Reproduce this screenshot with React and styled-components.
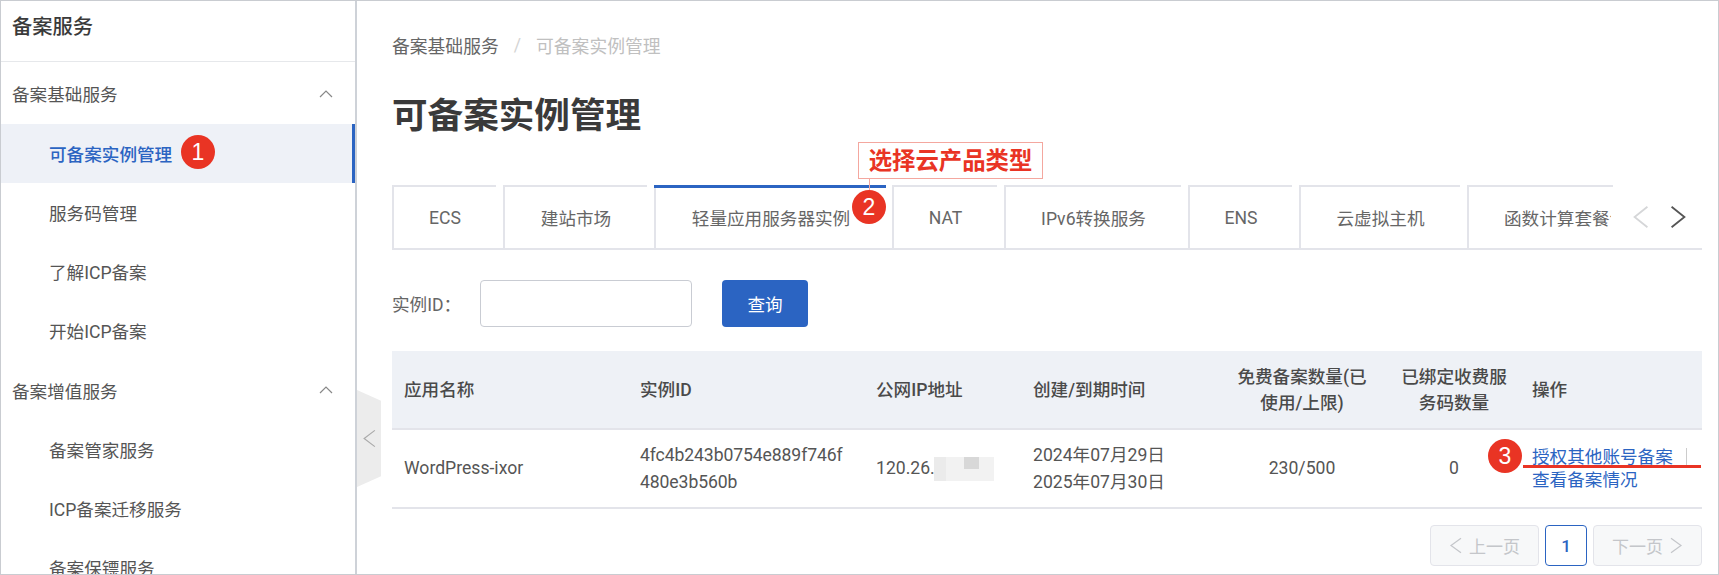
import React from 'react';
import styled, { createGlobalStyle } from 'styled-components';

const GlobalStyle = createGlobalStyle`
  html, body {
    margin: 0;
    padding: 0;
    background: #fff;
    overflow: hidden;
  }
  * {
    box-sizing: border-box;
  }
`;

const FONT = `Roboto, "Noto Sans CJK SC", sans-serif`;
const BLUE = '#2b64c2';
const RED = '#e93424';
const LINE = '#e3e4ea';

const Frame = styled.div`
  position: relative;
  display: flex;
  width: 1719px;
  height: 575px;
  overflow: hidden;
  border: 1px solid #c9ccd1;
  font-family: ${FONT};
  font-size: 17.6px;
  color: #555;
`;

const Sidebar = styled.aside`
  flex: 0 0 356px;
  height: 100%;
  border-right: 2px solid #ced2d8;
  overflow: hidden;
`;

const SideTitle = styled.div`
  height: 61px;
  padding: 0 0 12px 11px;
  border-bottom: 1px solid #e6e8eb;
  display: flex;
  align-items: center;
  font-size: 20.3px;
  font-weight: 500;
  color: #3a3a3a;
`;

const MenuGroup = styled.div`
  height: ${p => p.$first ? 62 : 60}px;
  padding: ${p => p.$first ? '1px' : '0'} 22px 0 11px;
  display: flex;
  align-items: center;
  justify-content: space-between;
`;

const MenuItem = styled.div`
  height: 59px;
  padding-left: 48px;
  display: flex;
  align-items: center;
  color: ${p => p.$active ? BLUE : '#555'};
  font-weight: ${p => p.$active ? 500 : 400};
  background: ${p => p.$active ? '#eef1f7' : 'transparent'};
  border-right: 3px solid ${p => p.$active ? BLUE : 'transparent'};
`;

const Collapse = styled.div`
  position: absolute;
  left: 356px;
  top: 389px;
  width: 24px;
  height: 97px;
  background: #ececec;
  clip-path: polygon(0 0, 100% 11%, 100% 89%, 0 100%);
  display: flex;
  align-items: center;
  justify-content: center;
`;

const Main = styled.main`
  flex: 1;
  min-width: 0;
  padding: 0 16px 0 35px;
`;

const Breadcrumb = styled.div`
  height: 87px;
  display: flex;
  align-items: center;
  gap: 15px;
  font-size: 17.8px;
  color: #666;
`;

const CrumbSep = styled.span`
  color: #d4d4d4;
`;

const CrumbCurrent = styled.span`
  color: #c0c0c0;
`;

const PageTitle = styled.h1`
  margin: 0;
  height: 97px;
  padding-top: 4px;
  font-size: 35.6px;
  line-height: 49px;
  font-weight: 700;
  color: #3a3a3a;
`;

const TabsBar = styled.div`
  display: flex;
  align-items: stretch;
  height: 65px;
  border-bottom: 2px solid ${LINE};
`;

const TabsScroller = styled.div`
  display: flex;
  width: 1221px;
  overflow: hidden;
`;

// the top rule of a tab stops 7px short of the next tab
const Tab = styled.div`
  flex: 0 0 ${p => p.$w}px;
  display: flex;
  align-items: center;
  justify-content: center;
  white-space: nowrap;
  color: #666;
  padding: 2px 7px 0 2px;
  margin-left: ${p => p.$gap || 0}px;
  background:
    linear-gradient(${LINE}, ${LINE}) top left / calc(100% - 7px) 2px no-repeat,
    linear-gradient(${LINE}, ${LINE}) top left / 2px 100% no-repeat;
  ${p => p.$active && `
    margin-bottom: -2px;
    padding: 2px 0 2px 2px;
    background:
      linear-gradient(${BLUE}, ${BLUE}) top left / 100% 3px no-repeat,
      linear-gradient(${LINE}, ${LINE}) top left / 2px 100% no-repeat,
      #fff;
  `}
  ${p => p.$cut && `
    justify-content: flex-start;
    padding-left: 37px;
    background-size: 100% 2px, 2px 100%;
  `}
`;

const TabText = styled.span`
  ${p => p.$cut && `
    display: block;
    width: 107px;
    overflow: hidden;
  `}
`;

const TabArrows = styled.div`
  display: flex;
  align-items: center;
  gap: 19px;
  padding-left: 19px;
`;

const SearchRow = styled.div`
  display: flex;
  align-items: center;
  height: 47px;
  margin-top: 30px;
`;

const FieldLabel = styled.label`
  width: 88px;
  color: #666;
`;

const TextBox = styled.input`
  width: 212px;
  height: 47px;
  border: 1.5px solid #c9ccd3;
  border-radius: 4px;
  background: #fff;
  outline: none;
`;

const SearchButton = styled.button`
  width: 86px;
  height: 47px;
  margin-left: 30px;
  border: none;
  border-radius: 4px;
  background: ${BLUE};
  color: #fff;
  font-family: ${FONT};
  font-size: 17.6px;
`;

const Table = styled.table`
  width: 1310px;
  margin-top: 24px;
  border-collapse: collapse;
  table-layout: fixed;
`;

const Th = styled.th`
  height: 78px;
  padding: 0 ${p => p.$pad || 12}px;
  background: #eef1f6;
  border-bottom: 2px solid ${LINE};
  font-weight: 500;
  line-height: 26px;
  color: #4a4a4a;
  text-align: ${p => p.$center ? 'center' : 'left'};
`;

const Td = styled.td`
  height: 79px;
  padding: 0 12px;
  border-bottom: 2px solid ${LINE};
  line-height: 27px;
  color: #555;
  text-align: ${p => p.$center ? 'center' : 'left'};
`;

const InstanceId = styled.span`
  display: block;
  width: 209px;
  letter-spacing: -0.1px;
  word-break: break-all;
`;

const BlurredIp = styled.span`
  display: inline-block;
  width: 60px;
  height: 24px;
  margin-left: -1px;
  vertical-align: middle;
  background:
    linear-gradient(#d8d8d8, #d8d8d8) 30px 0 / 15px 12px no-repeat,
    linear-gradient(#ebebeb, #ebebeb) 0 0 / 12px 24px no-repeat,
    #f2f2f2;
`;

const ActionLink = styled.a`
  display: block;
  color: ${BLUE};
  line-height: 23px;
  white-space: nowrap;
`;

const Pager = styled.div`
  display: flex;
  justify-content: flex-end;
  gap: 6px;
  margin-top: 16px;
`;

const PageButton = styled.div`
  width: ${p => p.$w}px;
  height: 41px;
  display: flex;
  align-items: center;
  justify-content: center;
  gap: 6px;
  border-radius: 4px;
  border: 1px solid ${p => p.$current ? BLUE : LINE};
  background: ${p => p.$current ? '#fff' : '#f7f8f9'};
  color: ${p => p.$current ? BLUE : '#c4c6ca'};
  font-size: 17px;
  font-weight: ${p => p.$current ? 500 : 400};
`;

// red numbered markers drawn over the screenshot
const Badge = styled.div`
  position: absolute;
  left: ${p => p.$x - 17}px;
  top: ${p => p.$y - 17}px;
  width: 34px;
  height: 34px;
  border-radius: 50%;
  background: ${RED};
  color: #fff;
  font-family: "Liberation Sans", sans-serif;
  font-size: 23px;
  display: flex;
  align-items: center;
  justify-content: center;
`;

const Callout = styled.div`
  position: absolute;
  left: 857px;
  top: 141px;
  width: 185px;
  height: 37px;
  padding-bottom: 3px;
  border: 1.5px solid #f4a79f;
  color: ${RED};
  font-size: 23.4px;
  font-weight: 700;
  display: flex;
  align-items: center;
  justify-content: center;
  white-space: nowrap;
  background: #fff;
`;

const CalloutStem = styled.div`
  position: absolute;
  left: 868px;
  top: 177px;
  width: 1px;
  height: 14px;
  background: #f4a79f;
`;

const RedLine = styled.div`
  position: absolute;
  left: 1522px;
  top: 464px;
  width: 178px;
  height: 3px;
  background: ${RED};
`;

const LinkDivider = styled.div`
  position: absolute;
  left: 1685px;
  top: 447px;
  width: 1px;
  height: 17px;
  background: #ccc;
`;

const Chevron = ({ d, size = 14, color = '#888', width = 1.2, h }) => (
  <svg width={size} height={h || size} viewBox="0 0 14 14" preserveAspectRatio="none" fill="none">
    <path d={d} stroke={color} strokeWidth={width} vectorEffect="non-scaling-stroke" />
  </svg>
);

const UP = 'M1 10 L7 4 L13 10';
const LEFT = 'M12 1 L2 7 L12 13';
const RIGHT = 'M2 1 L12 7 L2 13';

const tabs = [
  { label: 'ECS', w: 111 },
  { label: '建站市场', w: 151 },
  { label: '轻量应用服务器实例', w: 232, active: true },
  { label: 'NAT', w: 112, gap: 6 },
  { label: 'IPv6转换服务', w: 184 },
  { label: 'ENS', w: 111 },
  { label: '云虚拟主机', w: 168 },
  { label: '函数计算套餐包', w: 146, cut: true },
];

const App = () => {
  return (
    <Frame>
      <GlobalStyle />
      <Sidebar>
        <SideTitle>备案服务</SideTitle>
        <MenuGroup $first>
          备案基础服务
          <Chevron d={UP} />
        </MenuGroup>
        <MenuItem $active>可备案实例管理</MenuItem>
        <MenuItem>服务码管理</MenuItem>
        <MenuItem>了解ICP备案</MenuItem>
        <MenuItem>开始ICP备案</MenuItem>
        <MenuGroup>
          备案增值服务
          <Chevron d={UP} />
        </MenuGroup>
        <MenuItem>备案管家服务</MenuItem>
        <MenuItem>ICP备案迁移服务</MenuItem>
        <MenuItem>备案保镖服务</MenuItem>
      </Sidebar>
      <Collapse>
        <Chevron d={LEFT} size={15} h={19} color="#aaa" />
      </Collapse>

      <Main>
        <Breadcrumb>
          <span>备案基础服务</span>
          <CrumbSep>/</CrumbSep>
          <CrumbCurrent>可备案实例管理</CrumbCurrent>
        </Breadcrumb>
        <PageTitle>可备案实例管理</PageTitle>

        <TabsBar>
          <TabsScroller>
            {tabs.map(t => (
              <Tab key={t.label} $w={t.w} $active={t.active} $gap={t.gap} $cut={t.cut}>
                <TabText $cut={t.cut}>{t.label}</TabText>
              </Tab>
            ))}
          </TabsScroller>
          <TabArrows>
            <Chevron d={LEFT} size={18} h={24} color="#d5d6d8" width={1.8} />
            <Chevron d={RIGHT} size={18} h={24} color="#555" width={1.8} />
          </TabArrows>
        </TabsBar>

        <SearchRow>
          <FieldLabel>实例ID：</FieldLabel>
          <TextBox />
          <SearchButton>查询</SearchButton>
        </SearchRow>

        <Table>
          <colgroup>
            <col width="236" />
            <col width="236" />
            <col width="157" />
            <col width="195" />
            <col width="172" />
            <col width="132" />
            <col width="182" />
          </colgroup>
          <thead>
            <tr>
              <Th>应用名称</Th>
              <Th>实例ID</Th>
              <Th>公网IP地址</Th>
              <Th>创建/到期时间</Th>
              <Th $center $pad={20}>免费备案数量(已使用/上限)</Th>
              <Th $center>已绑定收费服务码数量</Th>
              <Th>操作</Th>
            </tr>
          </thead>
          <tbody>
            <tr>
              <Td>WordPress-ixor</Td>
              <Td><InstanceId>4fc4b243b0754e889f746f480e3b560b</InstanceId></Td>
              <Td>120.26.<BlurredIp /></Td>
              <Td>2024年07月29日<br />2025年07月30日</Td>
              <Td $center>230/500</Td>
              <Td $center>0</Td>
              <Td>
                <ActionLink>授权其他账号备案</ActionLink>
                <ActionLink>查看备案情况</ActionLink>
              </Td>
            </tr>
          </tbody>
        </Table>

        <Pager>
          <PageButton $w={109}>
            <Chevron d={LEFT} size={14} h={17} color="#c4c6ca" />
            上一页
          </PageButton>
          <PageButton $w={42} $current>1</PageButton>
          <PageButton $w={109}>
            下一页
            <Chevron d={RIGHT} size={14} h={17} color="#c4c6ca" />
          </PageButton>
        </Pager>
      </Main>

      <LinkDivider />
      <Callout>选择云产品类型</Callout>
      <CalloutStem />
      <RedLine />
      <Badge $x={197} $y={151}>1</Badge>
      <Badge $x={868} $y={206}>2</Badge>
      <Badge $x={1504} $y={455}>3</Badge>
    </Frame>
  );
};

export default App;
